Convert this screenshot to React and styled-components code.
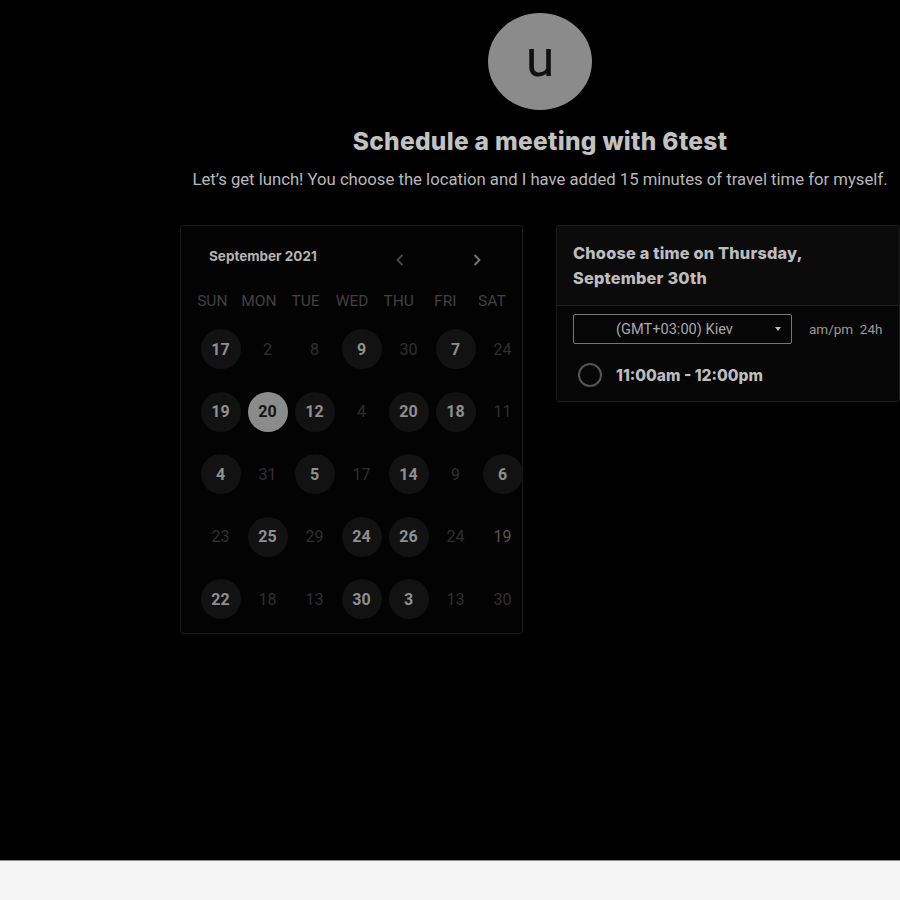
import React from 'react';
import styled, { createGlobalStyle, css } from 'styled-components';

const GlobalStyle = createGlobalStyle`
  html, body {
    margin: 0;
    padding: 0;
    background: #f5f5f5;
    overflow: hidden;
  }
  body {
    font-family: Roboto, "Liberation Sans", sans-serif;
  }
`;

// DATA
const WEEKDAYS = ['SUN', 'MON', 'TUE', 'WED', 'THU', 'FRI', 'SAT'];

// a = available, s = selected, m = muted, blank = unavailable
const WEEKS = [
  [['17', 'a'], ['2'], ['8'], ['9', 'a'], ['30'], ['7', 'a'], ['24']],
  [['19', 'a'], ['20', 's'], ['12', 'a'], ['4'], ['20', 'a'], ['18', 'a'], ['11']],
  [['4', 'a'], ['31'], ['5', 'a'], ['17'], ['14', 'a'], ['9'], ['6', 'a']],
  [['23'], ['25', 'a'], ['29'], ['24', 'a'], ['26', 'a'], ['24'], ['19', 'm']],
  [['22', 'a'], ['18'], ['13'], ['30', 'a'], ['3', 'a'], ['13'], ['30']],
];

function Chevron({ dir }) {
  return (
    <svg width="10" height="14" viewBox="0 0 10 14" fill="none">
      <path
        d={dir === 'left' ? 'M7.5 2 L2.5 7 L7.5 12' : 'M2.5 2 L7.5 7 L2.5 12'}
        stroke="currentColor"
        strokeWidth="1.8"
      />
    </svg>
  );
}

export default function App() {
  return (
    <>
      <GlobalStyle />
      <Page>
        <Content>
          <Avatar>u</Avatar>
          <Title>Schedule a meeting with 6test</Title>
          <Subtitle>
            Let’s get lunch! You choose the location and I have added 15 minutes of travel time for myself.
          </Subtitle>

          <Columns>
            <CalendarCard>
              <CalHeader>
                <MonthLabel>September 2021</MonthLabel>
                <NavButton dim>
                  <Chevron dir="left" />
                </NavButton>
                <NavButton>
                  <Chevron dir="right" />
                </NavButton>
              </CalHeader>

              <WeekdayRow>
                {WEEKDAYS.map((d) => (
                  <Weekday key={d}>{d}</Weekday>
                ))}
              </WeekdayRow>

              <DayGrid>
                {WEEKS.flat().map(([num, state], i) => (
                  <DayCell key={i}>
                    <Day state={state}>{num}</Day>
                  </DayCell>
                ))}
              </DayGrid>
            </CalendarCard>

            <TimePanel>
              <PanelHeader>
                <PanelTitle>
                  Choose a time on Thursday,
                  <br />
                  September 30th
                </PanelTitle>
              </PanelHeader>
              <PanelBody>
                <ZoneRow>
                  <ZoneSelect>
                    <span>(GMT+03:00) Kiev</span>
                    <Caret />
                  </ZoneSelect>
                  <FormatToggle>am/pm&nbsp;&nbsp;24h</FormatToggle>
                </ZoneRow>
                <SlotRow>
                  <Radio />
                  <SlotText>11:00am - 12:00pm</SlotText>
                </SlotRow>
              </PanelBody>
            </TimePanel>
          </Columns>
        </Content>
      </Page>
      <Footer />
    </>
  );
}

const Page = styled.div`
  background: #000;
  height: 860px;
  width: 1080px;
`;

const Content = styled.div`
  display: flex;
  flex-direction: column;
  align-items: center;
  padding-top: 13px;
`;

const Avatar = styled.div`
  width: 104px;
  height: 97px;
  border-radius: 50%;
  background: #8b8b8b;
  color: #111;
  display: flex;
  align-items: center;
  justify-content: center;
  font-family: Roboto, sans-serif;
  font-size: 52px;
  line-height: 1;
  padding-bottom: 6px;
  box-sizing: border-box;
`;

const Title = styled.h1`
  margin: 16px 0 0;
  font-family: Inter, "Liberation Sans", sans-serif;
  font-weight: 800;
  font-size: 24.5px;
  line-height: 30px;
  letter-spacing: 0.3px;
  color: #c2c2c2;
`;

const Subtitle = styled.p`
  margin: 14px 0 0;
  font-size: 16.7px;
  line-height: 20px;
  color: #b8b8b8;
`;

const Columns = styled.div`
  display: flex;
  align-items: flex-start;
  gap: 33px;
  margin-top: 35px;
`;

const CalendarCard = styled.div`
  width: 343px;
  height: 409px;
  box-sizing: border-box;
  border: 1px solid #1b1b1b;
  border-radius: 3px;
  background: #030303;
  padding: 15px 0 0 16px;
`;

const CalHeader = styled.div`
  display: flex;
  align-items: center;
  height: 30px;
  padding-left: 12px;
`;

const MonthLabel = styled.div`
  width: 176px;
  font-family: Inter, "Liberation Sans", sans-serif;
  font-weight: 700;
  font-size: 13.5px;
  color: #b5b5b5;
`;

const NavButton = styled.div`
  width: 30px;
  height: 30px;
  margin-top: 8px;
  display: flex;
  align-items: center;
  justify-content: center;
  color: ${(p) => (p.dim ? '#4a4a4a' : '#7a7a7a')};
  & + & {
    margin-left: 47px;
  }
`;

const WeekdayRow = styled.div`
  display: grid;
  grid-template-columns: repeat(7, 46.6px);
  margin: 20px 0 0 -8px;
  height: 20px;
  align-items: center;
`;

const Weekday = styled.div`
  font-size: 15.5px;
  color: #414141;
  text-align: center;
`;

const DayGrid = styled.div`
  display: grid;
  grid-template-columns: repeat(7, 47px);
  grid-auto-rows: 62.5px;
  margin-top: 7px;
`;

const DayCell = styled.div`
  display: flex;
  align-items: center;
  justify-content: center;
`;

const Day = styled.div`
  width: 40px;
  height: 40px;
  border-radius: 50%;
  display: flex;
  align-items: center;
  justify-content: center;
  font-size: 16px;
  color: #303030;
  font-weight: 400;

  ${(p) =>
    p.state === 'a' &&
    css`
      background: #121212;
      color: #8f8f8f;
      font-weight: 700;
    `}

  ${(p) =>
    p.state === 's' &&
    css`
      background: #8b8b8b;
      color: #141414;
      font-weight: 700;
    `}

  ${(p) =>
    p.state === 'm' &&
    css`
      color: #575757;
    `}
`;

const TimePanel = styled.div`
  width: 344px;
  box-sizing: border-box;
  border: 1px solid #1c1c1c;
  border-radius: 3px;
  background: #060606;
`;

const PanelHeader = styled.div`
  background: #0b0b0b;
  border-bottom: 1px solid #1e1e1e;
  padding: 15px 16px 14px;
`;

const PanelTitle = styled.div`
  font-family: Inter, "Liberation Sans", sans-serif;
  font-weight: 800;
  font-size: 16.3px;
  line-height: 25px;
  letter-spacing: 0.2px;
  color: #bdbdbd;
`;

const PanelBody = styled.div`
  padding: 8px 16px 14px;
`;

const ZoneRow = styled.div`
  display: flex;
  align-items: center;
`;

const ZoneSelect = styled.div`
  width: 219px;
  height: 30px;
  box-sizing: border-box;
  border: 1px solid #767676;
  border-radius: 2px;
  display: flex;
  align-items: center;
  padding: 0 10px 0 42px;
  font-size: 14.6px;
  color: #a8a8a8;

  span {
    flex: 1;
  }
`;

const Caret = styled.div`
  width: 0;
  height: 0;
  border-left: 3.5px solid transparent;
  border-right: 3.5px solid transparent;
  border-top: 4px solid #bdbdbd;
`;

const FormatToggle = styled.div`
  margin-left: 17px;
  font-size: 13.5px;
  color: #9a9a9a;
`;

const SlotRow = styled.div`
  display: flex;
  align-items: center;
  margin-top: 19px;
  padding-left: 5px;
`;

const Radio = styled.div`
  width: 24px;
  height: 24px;
  box-sizing: border-box;
  border: 2px solid #555;
  border-radius: 50%;
`;

const SlotText = styled.div`
  margin-left: 14px;
  font-family: Inter, "Liberation Sans", sans-serif;
  font-weight: 800;
  font-size: 15.6px;
  color: #bdbdbd;
`;

const Footer = styled.div`
  height: 40px;
  background: #f5f5f5;
  border-top: 1px solid #8a8a8a;
`;
